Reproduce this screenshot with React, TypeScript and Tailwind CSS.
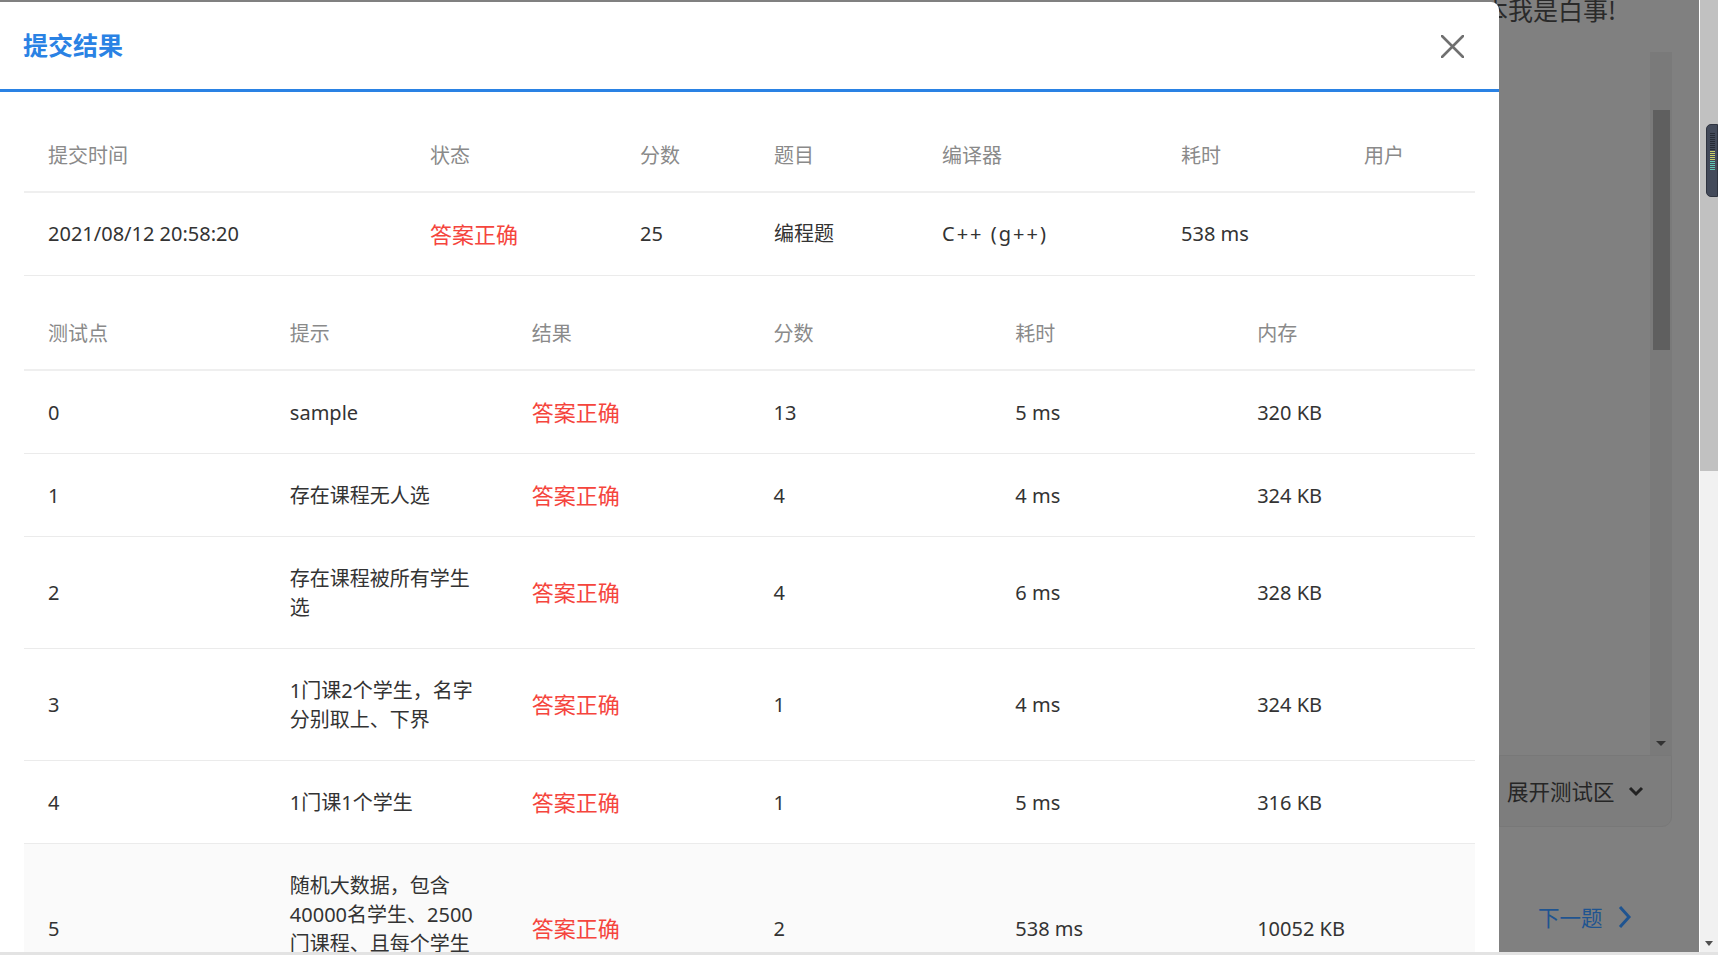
import React from "react";

const summaryHead = ["提交时间", "状态", "分数", "题目", "编译器", "耗时", "用户"];
const summaryRow = ["2021/08/12 20:58:20", "答案正确", "25", "编程题", "C++ (g++)", "538 ms", ""];

const caseHead = ["测试点", "提示", "结果", "分数", "耗时", "内存"];
const cases = [
    ["0", "sample", "13", "5 ms", "320 KB"],
    ["1", "存在课程无人选", "4", "4 ms", "324 KB"],
    ["2", "存在课程被所有学生选", "4", "6 ms", "328 KB"],
    ["3", "1门课2个学生，名字分别取上、下界", "1", "4 ms", "324 KB"],
    ["4", "1门课1个学生", "1", "5 ms", "316 KB"],
    ["5", "随机大数据，包含40000名学生、2500门课程、且每个学生选20门课", "2", "538 ms", "10052 KB"],
];

const summaryCols = "grid-cols-[382px_210px_134px_168px_239px_183px_133px]";

const ResultDialog = () => {
    return (
        <div className="absolute left-0 top-[2px] flex h-[950px] w-[1499px] flex-col overflow-hidden rounded-tr-[8px] bg-white">
            <div className="flex h-[90px] shrink-0 items-center justify-between border-b-[3px] border-[#2a82e4] pl-[23px] pr-[35px]">
                <span className="text-[25px] font-bold text-[#2a82e4]">提交结果</span>
                <svg width="23" height="23" viewBox="0 0 23 23" className="mt-[2px]">
                    <path d="M1 1 L22 22 M22 1 L1 22" stroke="#707070" strokeWidth="2.6" strokeLinecap="round" />
                </svg>
            </div>

            <div className="px-[24px] pt-[24px] text-[20px]">
                {/* summary table */}
                <div className={`grid ${summaryCols} h-[77px] border-b-2 border-[#efefef] text-[#8a8a8a]`}>
                    {summaryHead.map((h) => (
                        <div key={h} className="flex items-center px-[24px] pt-[4px]">
                            {h}
                        </div>
                    ))}
                </div>
                <div className={`grid ${summaryCols} h-[83px] border-b border-[#ebebeb] text-[#333]`}>
                    {summaryRow.map((c, i) => (
                        <div
                            key={i}
                            className={
                                i === 1
                                    ? "flex items-center px-[24px] text-[22px] text-[#f5453d]"
                                    : i === 4
                                      ? "flex items-center whitespace-nowrap px-[24px] tracking-[2px]"
                                      : "flex items-center whitespace-nowrap px-[24px]"
                            }
                        >
                            {c}
                        </div>
                    ))}
                </div>

                {/* test points */}
                <div className="mt-[19px] grid h-[76px] grid-cols-6 border-b-2 border-[#efefef] text-[#8a8a8a]">
                    {caseHead.map((h) => (
                        <div key={h} className="flex items-center px-[24px] pt-[4px]">
                            {h}
                        </div>
                    ))}
                </div>
                {cases.map((r, idx) => (
                    <div
                        key={r[0]}
                        className={`grid grid-cols-6 border-b border-[#ebebeb] text-[#333] ${idx === 5 ? "bg-[#fafafa]" : ""}`}
                    >
                        <div className="flex items-center px-[24px] py-[26.5px] leading-[29px]">{r[0]}</div>
                        <div className="flex items-center px-[24px] py-[26.5px] leading-[29px]">{r[1]}</div>
                        <div className="flex items-center px-[24px] py-[26.5px] text-[22px] leading-[29px] text-[#f5453d]">
                            答案正确
                        </div>
                        <div className="flex items-center px-[24px] py-[26.5px] leading-[29px]">{r[2]}</div>
                        <div className="flex items-center px-[24px] py-[26.5px] leading-[29px]">{r[3]}</div>
                        <div className="flex items-center px-[24px] py-[26.5px] leading-[29px]">{r[4]}</div>
                    </div>
                ))}
            </div>
        </div>
    );
};

const MeterWidget = () => (
    <div className="absolute right-0 top-[124px] flex h-[73px] w-[12px] flex-col items-center gap-[1px] rounded-l-[5px] border border-[#2f3440] bg-[#434a5a] pt-[8px]">
        {Array.from({ length: 9 }).map((_, i) => (
            <div key={"d" + i} className="h-[1px] w-[5px] bg-[#262b35]" />
        ))}
        {Array.from({ length: 5 }).map((_, i) => (
            <div key={"y" + i} className="h-[1px] w-[5px] bg-[#c9cf6a]" />
        ))}
        {Array.from({ length: 5 }).map((_, i) => (
            <div key={"t" + i} className="h-[1px] w-[5px] bg-[#5fc7b4]" />
        ))}
    </div>
);

export default function App() {
    return (
        <div className="relative flex h-[955px] w-[1718px] flex-col overflow-hidden bg-[#808080] font-['Noto_Sans','Noto_Sans_CJK_SC',sans-serif]">
            <div className="flex h-[952px]">
                {/* dimmed page behind the dialog */}
                <div className="flex h-full w-[1699px] flex-col bg-[#808080]">
                    <div className="-mt-[6px] ml-[1483px] whitespace-nowrap font-['Noto_Sans_CJK_SC',sans-serif] text-[25px] leading-[30px] text-[#2a2a2a]">
                        本我是白事!
                    </div>
                    <div className="ml-[1499px] flex w-[173px] flex-col">
                        <div className="ml-auto mt-[28px] flex h-[703px] w-[22px] flex-col items-center bg-[#7a7a7a]">
                            <div className="mt-[58px] h-[240px] w-[17px] bg-[#5f5f5f]" />
                            <div className="mb-[9px] mt-auto h-0 w-0 border-x-[5px] border-t-[5px] border-x-transparent border-t-[#333]" />
                        </div>
                        <div className="flex h-[72px] items-center rounded-br-[10px] border border-[#787878] bg-[#7d7d7d] pl-[7px] text-[21.5px] text-[#262626]">
                            <span className="font-['Noto_Sans_CJK_SC',sans-serif]">展开测试区</span>
                            <svg width="16" height="11" viewBox="0 0 16 11" className="ml-[13px]">
                                <path d="M2 2 L8 8 L14 2" stroke="#222" strokeWidth="3" fill="none" />
                            </svg>
                        </div>
                        <div className="mt-[75px] flex h-[30px] items-center pl-[39px] text-[21.5px] text-[#1f5490]">
                            <span className="font-['Noto_Sans_CJK_SC',sans-serif]">下一题</span>
                            <svg width="15" height="24" viewBox="0 0 15 24" className="ml-[14px]">
                                <path d="M3 2 L12 12 L3 22" stroke="#1f5490" strokeWidth="3" fill="none" />
                            </svg>
                        </div>
                    </div>
                </div>
                {/* browser scrollbar */}
                <div className="flex h-full w-[19px] flex-col border-l border-white bg-[#f1f1f1]">
                    <div className="h-[471px] bg-[#c1c1c1]" />
                    <div className="mb-[6px] ml-[5px] mt-auto h-0 w-0 border-x-[4px] border-t-[5px] border-x-transparent border-t-[#505050]" />
                </div>
            </div>
            <div className="h-[3px] bg-[#e3e3e3]" />

            <ResultDialog />
            <MeterWidget />
        </div>
    );
}
